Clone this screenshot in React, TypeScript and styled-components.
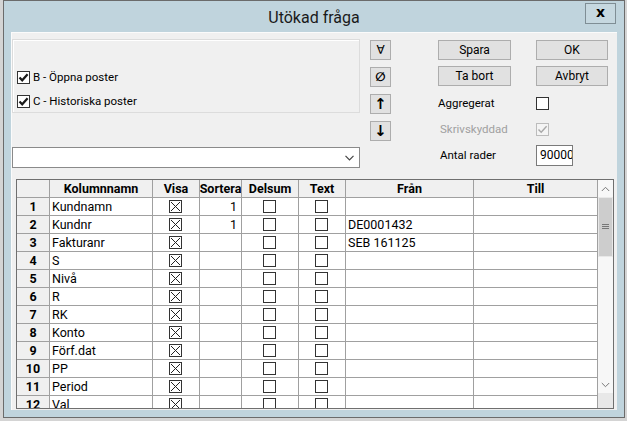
import React from 'react';
import styled, { createGlobalStyle } from 'styled-components';

const GlobalStyle = createGlobalStyle`
  html, body {
    margin: 0;
    padding: 0;
  }
  body {
    width: 627px;
    height: 421px;
    overflow: hidden;
    background: #d4d4d4;
    font-family: Roboto, "Noto Sans", sans-serif;
    color: #000;
  }
`;

type Mark = 'checked' | 'cross' | 'empty' | 'disabled';

type RowData = {
  name: string;
  sort?: string;
  from?: string;
};

const rows: RowData[] = [
  { name: 'Kundnamn', sort: '1' },
  { name: 'Kundnr', sort: '1', from: 'DE0001432' },
  { name: 'Fakturanr', from: 'SEB 161125' },
  { name: 'S' },
  { name: 'Nivå' },
  { name: 'R' },
  { name: 'RK' },
  { name: 'Konto' },
  { name: 'Förf.dat' },
  { name: 'PP' },
  { name: 'Period' },
  { name: 'Val' },
];

// column widths incl. the 1px right line
const COLS = {
  head: 33,
  name: 103,
  visa: 47,
  sort: 42,
  delsum: 57,
  text: 47,
  from: 128,
  till: 124,
};

const CheckBox = ({ mark }: { mark: Mark }) => (
  <Box $disabled={mark === 'disabled'}>
    {mark === 'cross' && (
      <svg width='11' height='11' viewBox='0 0 11 11'>
        <path d='M1 1 L10 10 M10 1 L1 10' stroke='#222' strokeWidth='1' fill='none' />
      </svg>
    )}
    {(mark === 'checked' || mark === 'disabled') && (
      <svg width='11' height='11' viewBox='0 0 11 11'>
        <path
          d='M1.5 5.5 L4.2 8.3 L9.6 2.2'
          stroke={mark === 'disabled' ? '#a8a8a8' : '#1a1a1a'}
          strokeWidth={mark === 'disabled' ? 1.4 : 2.2}
          fill='none'
        />
      </svg>
    )}
  </Box>
);

const App = () => {
  return (
    <>
      <GlobalStyle />
      <Window>
        <TitleBar>
          <span />
          <Title>Utökad fråga</Title>
          <CloseButton>x</CloseButton>
        </TitleBar>
        <Content>
          <TopArea>
            <LeftCol>
              <GroupBox>
                <CheckLine>
                  <CheckBox mark='checked' />
                  <span>B - Öppna poster</span>
                </CheckLine>
                <CheckLine>
                  <CheckBox mark='checked' />
                  <span>C - Historiska poster</span>
                </CheckLine>
              </GroupBox>
              <Combo>
                <svg width='9' height='6' viewBox='0 0 9 6'>
                  <path d='M0.5 0.8 L4.5 4.8 L8.5 0.8' stroke='#444' strokeWidth='1.2' fill='none' />
                </svg>
              </Combo>
            </LeftCol>
            <SmallCol>
              <SmallButton>∀</SmallButton>
              <SmallButton $italic>∅</SmallButton>
              <SmallButton $bold>↑</SmallButton>
              <SmallButton $bold>↓</SmallButton>
            </SmallCol>
            <RightArea>
              <ButtonGrid>
                <PushButton>Spara</PushButton>
                <PushButton>OK</PushButton>
                <PushButton>Ta bort</PushButton>
                <PushButton>Avbryt</PushButton>
              </ButtonGrid>
              <FieldRow>
                <FieldLabel>Aggregerat</FieldLabel>
                <CheckBox mark='empty' />
              </FieldRow>
              <FieldRow>
                <FieldLabel $indent $muted>
                  Skrivskyddad
                </FieldLabel>
                <CheckBox mark='disabled' />
              </FieldRow>
              <FieldRow>
                <FieldLabel $indent>Antal rader</FieldLabel>
                <NumberBox>90000</NumberBox>
              </FieldRow>
            </RightArea>
          </TopArea>

          <Grid>
            <Table>
              <Row>
                <HeadCell $w={COLS.head} />
                <HeadCell $w={COLS.name}>Kolumnnamn</HeadCell>
                <HeadCell $w={COLS.visa}>Visa</HeadCell>
                <HeadCell $w={COLS.sort}>Sortera</HeadCell>
                <HeadCell $w={COLS.delsum}>Delsum</HeadCell>
                <HeadCell $w={COLS.text}>Text</HeadCell>
                <HeadCell $w={COLS.from}>Från</HeadCell>
                <HeadCell $w={COLS.till}>Till</HeadCell>
              </Row>
              {rows.map((row, i) => (
                <Row key={row.name}>
                  <HeadCell $w={COLS.head}>{i + 1}</HeadCell>
                  <Cell $w={COLS.name}>{row.name}</Cell>
                  <Cell $w={COLS.visa} $align='center'>
                    <CheckBox mark='cross' />
                  </Cell>
                  <Cell $w={COLS.sort} $align='right'>
                    {row.sort}
                  </Cell>
                  <Cell $w={COLS.delsum} $align='center'>
                    <CheckBox mark='empty' />
                  </Cell>
                  <Cell $w={COLS.text} $align='center'>
                    <CheckBox mark='empty' />
                  </Cell>
                  <Cell $w={COLS.from}>{row.from}</Cell>
                  <Cell $w={COLS.till} />
                </Row>
              ))}
            </Table>
            <ScrollBar>
              <ScrollArrow>
                <svg width='9' height='6' viewBox='0 0 9 6'>
                  <path d='M0.8 5 L4.5 1.3 L8.2 5' stroke='#777' strokeWidth='1' fill='none' />
                </svg>
              </ScrollArrow>
              <Thumb>
                <svg width='7' height='6' viewBox='0 0 7 6'>
                  <path d='M0 0.5 H7 M0 2.5 H7 M0 4.5 H7' stroke='#777' strokeWidth='1' />
                </svg>
              </Thumb>
              <Track />
              <ScrollArrow>
                <svg width='9' height='6' viewBox='0 0 9 6'>
                  <path d='M0.8 1 L4.5 4.7 L8.2 1' stroke='#777' strokeWidth='1' fill='none' />
                </svg>
              </ScrollArrow>
              <Corner />
            </ScrollBar>
          </Grid>
        </Content>
      </Window>
    </>
  );
};

export default App;

const Window = styled.div`
  margin-left: 3px;
  width: 622px;
  height: 418px;
  box-sizing: border-box;
  border: 1px solid #6b6b6b;
  background: #c0d4dd;
  padding: 0 7px 7px 7px;
  display: flex;
  flex-direction: column;
`;

const TitleBar = styled.div`
  height: 31px;
  display: grid;
  grid-template-columns: 1fr auto 1fr;
  align-items: center;
`;

const Title = styled.div`
  font-size: 16px;
  color: #1a1a1a;
  padding-top: 2px;
`;

const CloseButton = styled.div`
  justify-self: end;
  align-self: start;
  margin-top: 2px;
  margin-right: 1px;
  width: 31px;
  height: 21px;
  box-sizing: border-box;
  border: 1px solid #7f8e95;
  background: #c6d8e0;
  display: flex;
  align-items: center;
  justify-content: center;
  font-family: "DejaVu Sans", sans-serif;
  font-weight: bold;
  font-size: 14px;
  line-height: 1;
  padding-bottom: 3px;
`;

const Content = styled.div`
  flex: 1;
  background: #f0f0f0;
  border-top: 1px solid #fbfbfb;
  border-left: 1px solid #fbfbfb;
  display: flex;
  flex-direction: column;
  padding-bottom: 1px;
`;

const TopArea = styled.div`
  height: 146px;
  display: flex;
`;

const LeftCol = styled.div`
  width: 348px;
  display: flex;
  flex-direction: column;
`;

const GroupBox = styled.div`
  margin-top: 6px;
  height: 74px;
  box-sizing: border-box;
  border: 1px solid #dcdcdc;
  box-shadow: inset 1px 1px 0 #fff;
  padding: 28px 0 0 4px;
  display: flex;
  flex-direction: column;
  gap: 6px;
`;

const CheckLine = styled.div`
  display: flex;
  align-items: center;
  gap: 3px;
  font-size: 11.5px;
  height: 18px;
`;

const Box = styled.div<{ $disabled?: boolean }>`
  width: 13px;
  height: 13px;
  box-sizing: border-box;
  border: 1px solid ${(p) => (p.$disabled ? '#bcbcbc' : '#333')};
  background: ${(p) => (p.$disabled ? '#f4f4f4' : '#fff')};
  display: flex;
  align-items: center;
  justify-content: center;
  flex-shrink: 0;
`;

const Combo = styled.div`
  margin-top: 34px;
  height: 21px;
  box-sizing: border-box;
  border: 1px solid #8a8a8a;
  background: #fff;
  display: flex;
  align-items: center;
  justify-content: flex-end;
  padding-right: 5px;
`;

const SmallCol = styled.div`
  margin-left: 10px;
  padding-top: 7px;
  display: flex;
  flex-direction: column;
  gap: 7px;
`;

const SmallButton = styled.div<{ $bold?: boolean; $italic?: boolean }>`
  width: 21px;
  height: 20px;
  box-sizing: border-box;
  border: 1px solid #adadad;
  background: #e1e1e1;
  display: flex;
  align-items: center;
  justify-content: center;
  font-family: "DejaVu Sans", sans-serif;
  font-size: ${(p) => (p.$bold ? '15px' : '12px')};
  font-weight: ${(p) => (p.$bold || p.$italic ? 'bold' : 'normal')};
  font-style: ${(p) => (p.$italic ? 'italic' : 'normal')};
  line-height: 1;
`;

const RightArea = styled.div`
  margin-left: 47px;
  padding-top: 7px;
  display: flex;
  flex-direction: column;
`;

const ButtonGrid = styled.div`
  display: grid;
  grid-template-columns: 73px 72px;
  column-gap: 25px;
  row-gap: 6px;
  margin-bottom: 4px;
`;

const PushButton = styled.div`
  height: 20px;
  box-sizing: border-box;
  border: 1px solid #adadad;
  background: #e1e1e1;
  display: flex;
  align-items: center;
  justify-content: center;
  font-size: 12px;
`;

const FieldRow = styled.div`
  height: 26px;
  display: flex;
  align-items: center;
`;

const FieldLabel = styled.div<{ $indent?: boolean; $muted?: boolean }>`
  width: 98px;
  box-sizing: border-box;
  padding-left: ${(p) => (p.$indent ? '2px' : '0')};
  font-size: 11.5px;
  color: ${(p) => (p.$muted ? '#a0a0a0' : '#000')};
`;

const NumberBox = styled.div`
  width: 37px;
  height: 21px;
  box-sizing: border-box;
  border: 1px solid #7a7a7a;
  background: #fff;
  font-size: 12px;
  padding-left: 3px;
  display: flex;
  align-items: center;
  overflow: hidden;
  white-space: nowrap;
`;

const Grid = styled.div`
  margin-left: 4px;
  width: 598px;
  height: 230px;
  box-sizing: border-box;
  border: 1px solid #6f6f6f;
  background: #fff;
  display: flex;
  overflow: hidden;
`;

const Table = styled.div`
  width: 581px;
  display: flex;
  flex-direction: column;
  overflow: hidden;
`;

const Row = styled.div`
  display: flex;
  flex-shrink: 0;
  height: 18px;
`;

const HeadCell = styled.div<{ $w: number }>`
  width: ${(p) => p.$w}px;
  flex-shrink: 0;
  box-sizing: border-box;
  border-right: 1px solid #a0a0a0;
  border-bottom: 1px solid #a0a0a0;
  background: #f0f0f0;
  display: flex;
  align-items: center;
  justify-content: center;
  overflow: hidden;
  white-space: nowrap;
  font-size: 12.5px;
  font-weight: bold;
`;

const Cell = styled.div<{ $w: number; $align?: 'left' | 'center' | 'right' }>`
  width: ${(p) => p.$w}px;
  flex-shrink: 0;
  box-sizing: border-box;
  border-right: 1px solid #a0a0a0;
  border-bottom: 1px solid #a0a0a0;
  display: flex;
  align-items: center;
  justify-content: ${(p) =>
    p.$align === 'center' ? 'center' : p.$align === 'right' ? 'flex-end' : 'flex-start'};
  padding: 0 4px 0 2px;
  overflow: hidden;
  white-space: nowrap;
  font-size: 12.5px;
`;

const ScrollBar = styled.div`
  width: 15px;
  display: flex;
  flex-direction: column;
  background: #f7f7f7;
`;

const ScrollArrow = styled.div`
  height: 17px;
  display: flex;
  align-items: center;
  justify-content: center;
`;

const Thumb = styled.div`
  height: 60px;
  box-sizing: border-box;
  background: #cdcdcd;
  border: 1px solid #e8e8e8;
  display: flex;
  align-items: center;
  justify-content: center;
`;

const Track = styled.div`
  flex: 1;
`;

const Corner = styled.div`
  height: 15px;
  background: #e8e8e8;
`;
